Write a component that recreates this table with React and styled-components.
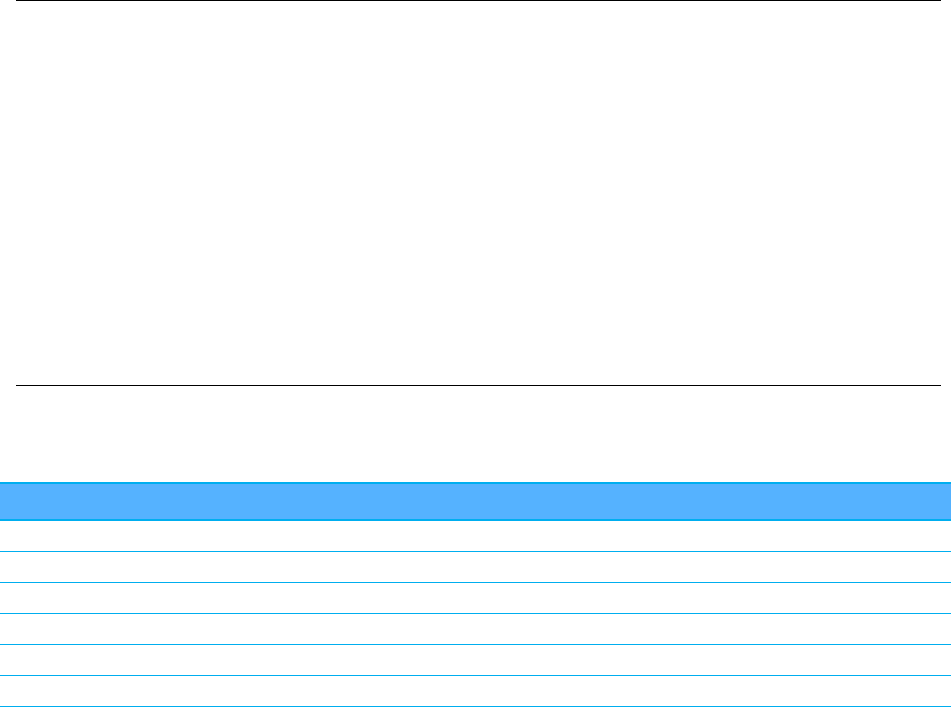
import React from "react";
import styled, { createGlobalStyle } from "styled-components";

const Global = createGlobalStyle`
  html, body { margin: 0; padding: 0; background: #ffffff; }
  body { font-family: "Liberation Sans", Arial, sans-serif; }
`;

const Page = styled.div`
  display: flex;
  flex-direction: column;
  width: 951px;
`;

const ChartPanel = styled.div`
  box-sizing: border-box;
  margin-left: 16px;
  width: 925px;
  height: 386px;
  border-top: 1px solid #000000;
  border-bottom: 1px solid #000000;
  position: relative;
`;

const Gap = styled.div`
  height: 96px;
`;

const Table = styled.div`
  display: flex;
  flex-direction: column;
  width: 951px;
`;

const HeaderRow = styled.div`
  height: 35px;
  background: #55b2ff;
  border-top: 2px solid #00aeef;
  border-bottom: 2px solid #00aeef;
`;

const Row = styled.div`
  height: 30px;
  border-bottom: 1px solid #00aeef;
`;

export default function App() {
  const rows = [0, 1, 2, 3, 4, 5];
  return (
    <>
      <Global />
      <Page>
        <ChartPanel />
        <Gap />
        <Table>
          <HeaderRow />
          {rows.map((r) => (
            <Row key={r} />
          ))}
        </Table>
      </Page>
    </>
  );
}
